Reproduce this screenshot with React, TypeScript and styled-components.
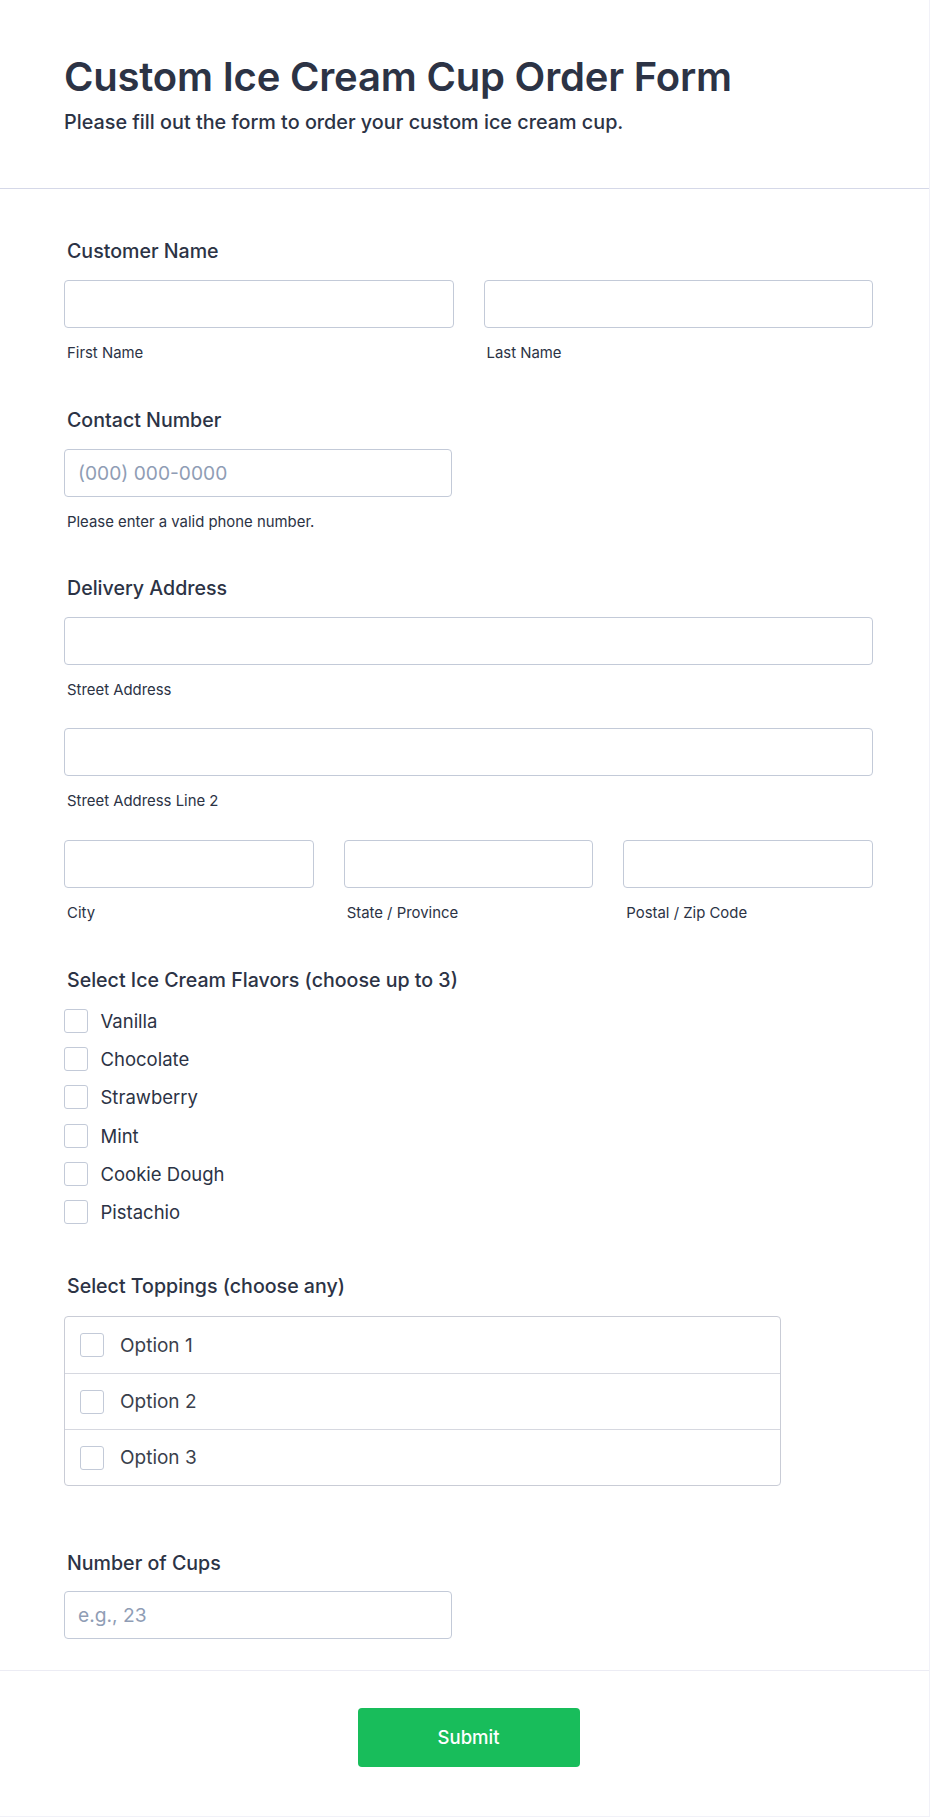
import { styled, createGlobalStyle } from 'styled-components';

const GlobalStyle = createGlobalStyle`
  * {
    box-sizing: border-box;
  }
  body {
    margin: 0;
    background: #fff;
    font-family: Inter, 'Noto Sans', sans-serif;
    color: #2c3345;
  }
`;

const Page = styled.div`
  width: 930px;
  min-height: 1817px;
  background: #fff;
  border-right: 1px solid #f1f1f8;
  border-bottom: 1px solid #f1f1f8;
`;

const Header = styled.header`
  padding: 53px 64px 53px;
  border-bottom: 1px solid #d5d8e8;
`;

const Title = styled.h1`
  margin: 0;
  font-size: 40px;
  line-height: 48px;
  font-weight: 600;
  letter-spacing: -0.2px;
  color: #2c3345;
`;

const Subtitle = styled.p`
  margin: 9px 0 0;
  font-size: 19.8px;
  line-height: 25px;
  font-weight: 500;
  color: #2c3345;
`;

const Body = styled.div`
  padding: 50px 56px 31px 64px;
  border-bottom: 1px solid #ececf4;
`;

const Field = styled.section<{ $after: number }>`
  margin-bottom: ${(p) => p.$after}px;
`;

const Label = styled.div<{ $below?: number }>`
  padding-left: 3px;
  font-size: 19.6px;
  line-height: 24px;
  font-weight: 500;
  color: #2c3345;
  margin-bottom: ${(p) => p.$below ?? 17}px;
`;

const Input = styled.input<{ $w?: number }>`
  display: block;
  width: ${(p) => (p.$w ? `${p.$w}px` : '100%')};
  height: 48px;
  padding: 0 13px;
  border: 1px solid #c3cad8;
  border-radius: 4px;
  background: #fff;
  font-family: Inter, sans-serif;
  font-size: 19.2px;
  color: #2c3345;
  outline: none;
  &::placeholder {
    color: #8f9db5;
  }
`;

const Sub = styled.div`
  padding-left: 3px;
  margin-top: 15px;
  font-size: 14.9px;
  line-height: 20px;
  color: #2c3345;
`;

const Cols = styled.div<{ $n: number }>`
  display: grid;
  grid-template-columns: repeat(${(p) => p.$n}, 1fr);
  column-gap: 30px;
`;

const AddressLine = styled.div<{ $after: number }>`
  margin-bottom: ${(p) => p.$after}px;
`;

const CheckList = styled.div`
  display: flex;
  flex-direction: column;
  gap: 14.4px;
`;

const CheckRow = styled.label`
  display: flex;
  align-items: center;
  gap: 12.5px;
  height: 24px;
  font-size: 18.5px;
  line-height: 24px;
  color: #2c3345;
`;

const Box = styled.span`
  flex: none;
  width: 24px;
  height: 24px;
  border: 1px solid #c3cad8;
  border-radius: 3px;
  background: #fff;
`;

const OptionTable = styled.div`
  width: 717px;
  border: 1px solid #c9ccd6;
  border-radius: 4px;
  overflow: hidden;
`;

const OptionRow = styled.label`
  display: flex;
  align-items: center;
  gap: 16px;
  height: 56px;
  padding-left: 15px;
  font-size: 19px;
  color: #3a3f4c;
  & + & {
    border-top: 1px solid #d6d8e0;
  }
`;

const Footer = styled.div`
  display: flex;
  justify-content: center;
  padding: 37px 56px 49px 64px;
`;

const SubmitButton = styled.button`
  width: 222px;
  height: 59px;
  border: none;
  border-radius: 4px;
  background: #18bd5b;
  color: #fff;
  font-family: Inter, sans-serif;
  font-size: 18.5px;
  font-weight: 500;
`;

const flavors = ['Vanilla', 'Chocolate', 'Strawberry', 'Mint', 'Cookie Dough', 'Pistachio'];
const toppings = ['Option 1', 'Option 2', 'Option 3'];

export default function App() {
  return (
    <>
      <GlobalStyle />
      <Page>
        <Header>
          <Title>Custom Ice Cream Cup Order Form</Title>
          <Subtitle>Please fill out the form to order your custom ice cream cup.</Subtitle>
        </Header>

        <Body>
          <Field $after={45}>
            <Label>Customer Name</Label>
            <Cols $n={2}>
              <div>
                <Input />
                <Sub>First Name</Sub>
              </div>
              <div>
                <Input />
                <Sub>Last Name</Sub>
              </div>
            </Cols>
          </Field>

          <Field $after={44}>
            <Label>Contact Number</Label>
            <Input $w={388} placeholder="(000) 000-0000" />
            <Sub>Please enter a valid phone number.</Sub>
          </Field>

          <Field $after={45}>
            <Label>Delivery Address</Label>
            <AddressLine $after={27.5}>
              <Input />
              <Sub>Street Address</Sub>
            </AddressLine>
            <AddressLine $after={29}>
              <Input />
              <Sub>Street Address Line 2</Sub>
            </AddressLine>
            <Cols $n={3}>
              <div>
                <Input />
                <Sub>City</Sub>
              </div>
              <div>
                <Input />
                <Sub>State / Province</Sub>
              </div>
              <div>
                <Input />
                <Sub>Postal / Zip Code</Sub>
              </div>
            </Cols>
          </Field>

          <Field $after={49.5}>
            <Label>Select Ice Cream Flavors (choose up to 3)</Label>
            <CheckList>
              {flavors.map((f) => (
                <CheckRow key={f}>
                  <Box />
                  {f}
                </CheckRow>
              ))}
            </CheckList>
          </Field>

          <Field $after={64.5}>
            <Label $below={18.5}>Select Toppings (choose any)</Label>
            <OptionTable>
              {toppings.map((t) => (
                <OptionRow key={t}>
                  <Box />
                  {t}
                </OptionRow>
              ))}
            </OptionTable>
          </Field>

          <Field $after={0}>
            <Label $below={16}>Number of Cups</Label>
            <Input $w={388} placeholder="e.g., 23" />
          </Field>
        </Body>

        <Footer>
          <SubmitButton>Submit</SubmitButton>
        </Footer>
      </Page>
    </>
  );
}
